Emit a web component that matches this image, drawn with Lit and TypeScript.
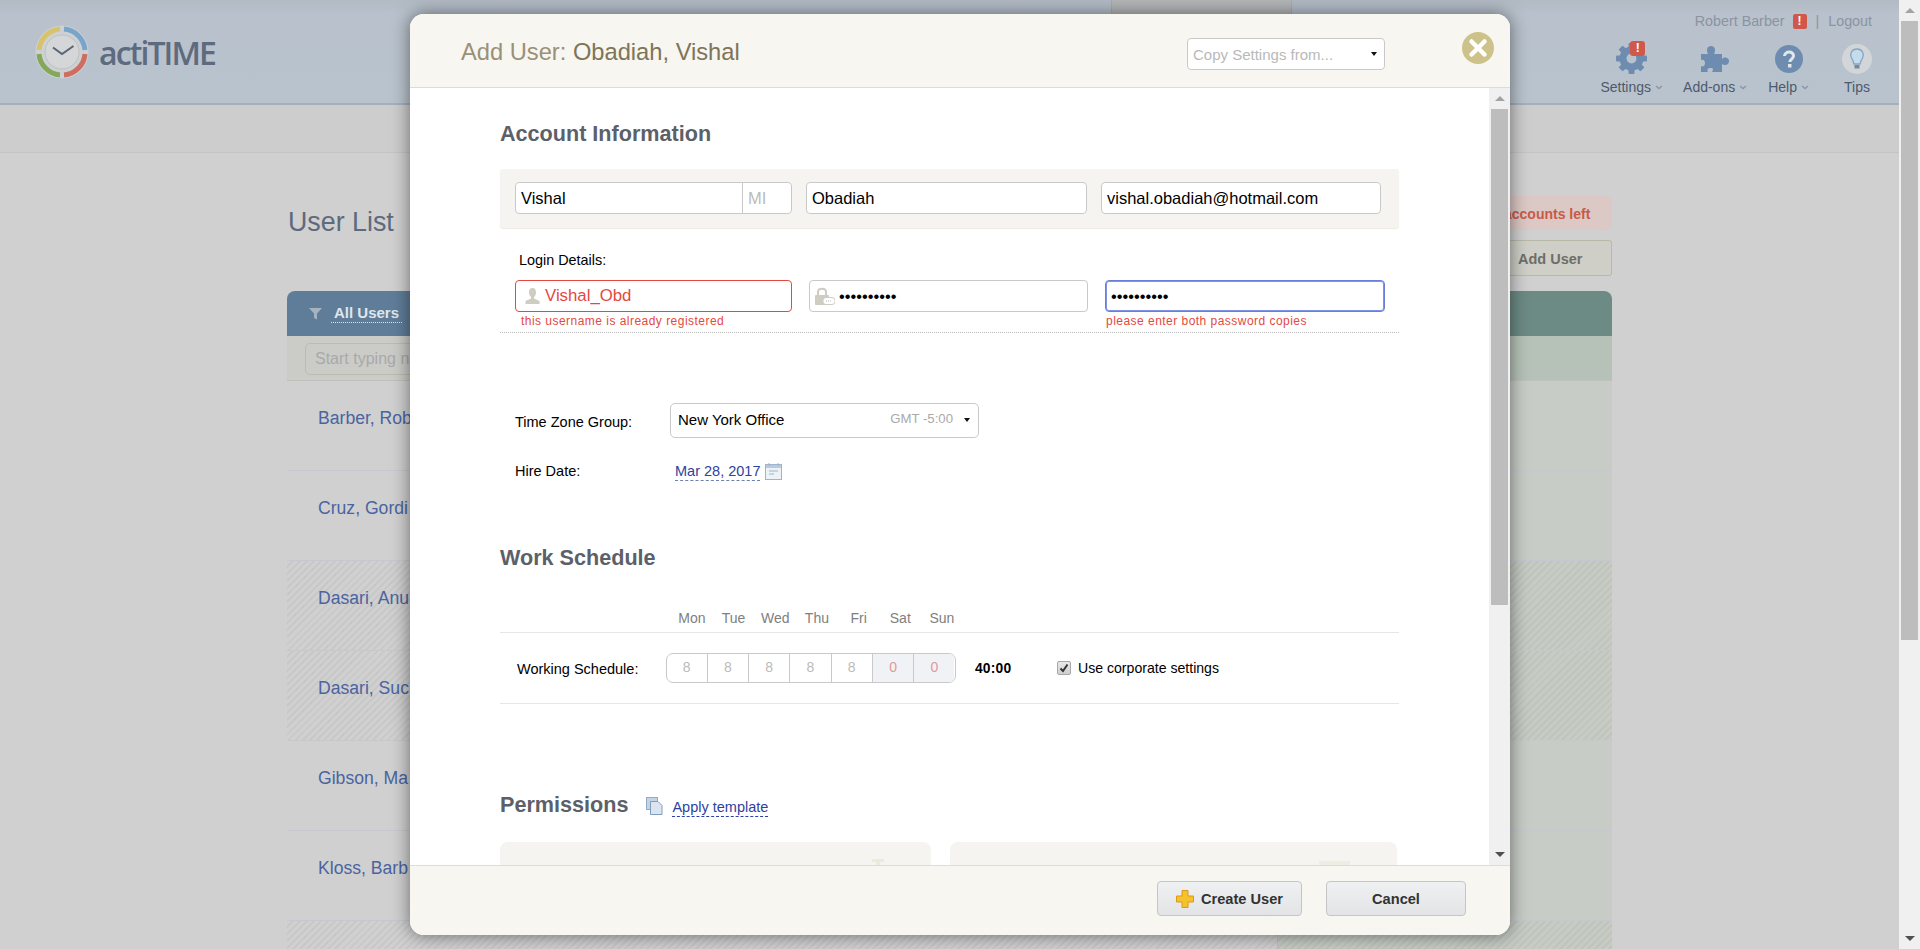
import { LitElement, html, css, svg } from "lit";
import { customElement } from "lit/decorators.js";

const rows = [
  { name: "Barber, Rob", kind: "plain" },
  { name: "Cruz, Gordi", kind: "plain" },
  { name: "Dasari, Anu", kind: "hatch" },
  { name: "Dasari, Suc", kind: "hatch" },
  { name: "Gibson, Ma", kind: "plain" },
  { name: "Kloss, Barb", kind: "plain" },
  { name: "", kind: "hatch" },
];
const days = ["Mon", "Tue", "Wed", "Thu", "Fri", "Sat", "Sun"];
const hours = ["8", "8", "8", "8", "8", "0", "0"];

const chevron = html`<svg class="chev" width="8" height="5" viewBox="0 0 8 5"><path d="M1 1l3 2.6L7 1" fill="none" stroke="#8b95a3" stroke-width="1.3"/></svg>`;

const gearTeeth = [0, 45, 90, 135, 180, 225, 270, 315].map(
  (a) => svg`<rect x="13.5" y="1" width="6" height="6.5" rx="1" transform="rotate(${a} 16.5 16.5)" fill="#6d8cb0"/>`
);

@customElement("app-root")
export class AppRoot extends LitElement {
  static styles = css`
    :host { display: flex; position: relative; width: 1920px; height: 949px; overflow: hidden; background: #d0d0d0; font-family: "Liberation Sans", Arial, sans-serif; color: #000; }
    * { box-sizing: border-box; }
    svg { display: block; flex: none; }
    .page { flex: 1; min-width: 0; height: 949px; overflow: hidden; display: flex; flex-direction: column; }
    .scroll { flex: none; width: 21px; background: #f0f0f0; display: flex; flex-direction: column; align-items: center; padding: 0 2px; }
    .arrow-box { flex: none; height: 21px; width: 100%; display: flex; align-items: center; justify-content: center; }
    .up { width: 0; height: 0; border: 5px solid transparent; border-top: 0; border-bottom: 5px solid #a3a3a3; }
    .down { width: 0; height: 0; border: 5px solid transparent; border-bottom: 0; border-top: 5px solid #505050; }
    .thumb { width: 100%; background: #bdbdbd; flex: none; }
    .grow { flex: 1; }

    .top { height: 105px; flex: none; display: flex; background: linear-gradient(180deg, #b2bac4 0, #b8c1cc 14px, #b9c3ce 100%); border-bottom: 2px solid #a6b0bc; }
    .logo { display: flex; align-items: center; padding-left: 35px; height: 103px; width: 1111px; flex: none; }
    .logo-text { font-family: "Open Sans", sans-serif; font-weight: 600; font-size: 32px; letter-spacing: -1.9px; color: #5e6a7e; margin: 2px 0 0 10px; }
    .tab { width: 181px; height: 47px; flex: none; background: #b5b7b8; border: 1px solid #a8aeb6; border-top: 0; }
    .top-right { margin-left: auto; display: flex; flex-direction: column; align-items: flex-end; padding-right: 27px; }
    .user-row { display: flex; align-items: center; height: 16px; margin-top: 13px; font-size: 14.3px; color: #8a94a2; }
    .alert { width: 14px; height: 15px; border-radius: 2px; background: #d0584a; color: #fff; font-weight: 700; font-size: 12px; line-height: 15px; text-align: center; margin-left: 8px; }
    .sep { margin: 0 9px 0 9px; }
    .icons { display: flex; margin-top: 12px; margin-right: 0; }
    .item { display: flex; flex-direction: column; align-items: center; }
    .item-icon { height: 35px; display: flex; align-items: center; justify-content: center; position: relative; }
    .item-label { display: flex; align-items: center; gap: 4px; font-size: 14px; color: #4d5a6c; height: 20px; margin-top: 1px; }
    .badge { position: absolute; left: 15px; top: 0; width: 15px; height: 15px; border-radius: 3px; background: #d0584a; color: #fff; font-size: 12px; font-weight: 700; line-height: 15px; text-align: center; }
    .gap-a { margin-left: 20px; }
    .gap-b { margin-left: 21px; }
    .gap-c { margin-left: 33px; }

    .band { height: 48px; flex: none; background: #cdcdcd; border-bottom: 1px solid #c4c4c4; }
    .content { padding: 43px 0 0 287px; width: 1612px; }
    .title-row { display: flex; justify-content: space-between; align-items: flex-start; }
    .title { font-size: 26.8px; line-height: 32px; color: #5d6a7c; margin-top: 10px; margin-left: 1px; }
    .actions { display: flex; flex-direction: column; align-items: flex-end; gap: 10px; margin-bottom: 15px; }
    .pill { height: 34px; width: 140px; border-radius: 6px; background: #dcc8c4; color: #c95a48; font-weight: 700; font-size: 14px; line-height: 36px; padding-left: 32px; }
    .addbtn { height: 36px; width: 140px; border-radius: 3px; background: #cfcfc8; border: 1px solid #b9b9a8; color: #6e6e68; font-weight: 700; font-size: 14.5px; line-height: 36px; padding-left: 45px; }
    .head { display: flex; height: 45px; border-radius: 8px 8px 0 0; overflow: hidden; }
    .head-l { width: 991px; background: #5f7d99; display: flex; align-items: center; padding-left: 22px; gap: 9px; color: #dfe5ea; font-size: 15px; font-weight: 700; }
    .head-r { flex: 1; background: #6c8b84; }
    .all { border-bottom: 1px dotted #dfe5ea; padding: 0 3px; line-height: 18px; margin-top: -1px; }
    .filter { display: flex; height: 45px; border-bottom: 1px solid #bfc1bc; }
    .filter-l { width: 991px; background: #cbccc8; padding: 7px 0 0 18px; }
    .filter-r { flex: 1; background: #b6c2b8; }
    .search { width: 400px; height: 32px; border: 1px solid #bdbcb0; border-radius: 5px; padding-left: 9px; line-height: 30px; font-size: 16px; color: #a9a9a9; }
    .row { display: flex; height: 90px; border-bottom: 1px solid #c6c8cf; }
    .row-l { width: 991px; padding: 27px 0 0 31px; font-size: 17.6px; line-height: 20px; color: #4a64a0; }
    .row-r { flex: 1; background: #c7cdc6; }
    .row.hatch { border-bottom-color: #c8c8c8; }
    .row.hatch .row-l { background: repeating-linear-gradient(135deg, #d0d0d0 0 3px, #c8c8c8 3px 5px); }
    .row.hatch .row-r { background: repeating-linear-gradient(135deg, #c6cbc4 0 3px, #bfc4bd 3px 5px); }
    .row-l.div { border-right: 1px solid #c0c0c0; }

    .modal { position: absolute; left: 410px; top: 14px; width: 1100px; height: 921px; border-radius: 14px; background: #fff; box-shadow: 0 0 18px rgba(0,0,0,.5); display: flex; flex-direction: column; overflow: hidden; }
    .m-head { height: 74px; flex: none; background: #f8f6f0; border-bottom: 1px solid #e0dcd2; display: flex; align-items: center; padding-left: 51px; }
    .m-title { font-size: 23.7px; color: #9a9078; margin-top: 3px; }
    .m-title b { font-weight: 400; color: #7f7458; }
    .copy { margin-left: auto; width: 198px; height: 32px; background: #fff; border: 1px solid #c9c9c9; border-radius: 4px; display: flex; align-items: center; justify-content: space-between; padding: 1px 7px 0 5px; font-size: 15px; color: #b9b9b9; margin-top: 6px; }
    .caret { width: 0; height: 0; border: 3.5px solid transparent; border-bottom: 0; border-top: 4px solid #111; }
    .close { width: 32px; height: 32px; border-radius: 50%; background: #cdc28a; margin: -6px 16px 0 77px; display: flex; align-items: center; justify-content: center; }
    .m-mid { flex: 1; min-height: 0; display: flex; }
    .m-body { flex: 1; min-width: 0; overflow: hidden; padding: 33px 0 0 90px; }
    .m-body .scrollwrap { width: 899px; }
    h2 { margin: 0; font-size: 21.6px; line-height: 26px; font-weight: 700; color: #5c6068; }
    .name-band { margin-top: 22px; height: 59px; background: #f6f4f0; border-radius: 3px; box-shadow: 0 1px 1px #eeeae4; padding: 13px 0 0 15px; display: flex; }
    .field { height: 32px; background: #fff; border: 1px solid #c9c9c9; border-radius: 4px; display: flex; align-items: center; padding-left: 5px; font-size: 16.5px; flex: none; }
    .mi { margin-left: auto; width: 49px; height: 100%; border-left: 1px solid #c9c9c9; color: #bbb; padding-left: 5px; line-height: 30px; }
    .w1 { width: 277px; }
    .w2 { width: 281px; margin-left: 14px; }
    .w3 { width: 280px; margin-left: 14px; }
    .login-label { margin: 23px 0 0 19px; font-size: 14.4px; line-height: 18px; }
    .login { margin-top: 11px; padding: 0 0 3px 15px; border-bottom: 1px dotted #bcbcbc; display: grid; grid-template-columns: 277px 279px 280px; column-gap: 17px; }
    .login .field { padding-left: 9px; gap: 5px; }
    .err-f { border-color: #e4493f; color: #e4493f; font-size: 16.8px !important; }
    .focus { border: 1px solid #6a7fd8; box-shadow: 0 0 0 1px #7f93e4 inset; padding-left: 5px !important; }
    .dots { font-size: 16.4px; letter-spacing: 0; line-height: 1; }
    .err { color: #e4493f; font-size: 12px; line-height: 16px; margin-top: 1px; padding-left: 6px; letter-spacing: .47px; white-space: nowrap; }
    .err.r { padding-left: 1px; }
    .tz { display: flex; margin-top: 70px; padding-left: 15px; }
    .lbl { width: 155px; font-size: 14.5px; line-height: 18px; flex: none; }
    .tz .lbl { padding-top: 10px; }
    .tz-sel { width: 309px; height: 35px; border: 1px solid #c9c9c9; border-radius: 5px; display: flex; align-items: center; padding: 0 8px 3px 7px; font-size: 15px; }
    .gmt { margin-left: auto; color: #aaa; font-size: 13.2px; margin-top: -1px; margin-right: 11px; }
    .tz-sel .caret { margin-top: 2px; }
    .hire { display: flex; margin-top: 24px; padding-left: 15px; align-items: flex-start; }
    .hire .lbl { width: 160px; }
    .link { color: #2d42a0; font-size: 14.5px; line-height: 18px; border-bottom: 1px dashed #6e7fb0; }
    .cal { margin: 0 0 0 5px; }
    .ws { margin-top: 64px; }
    .days { margin-top: 38px; padding-left: 171px; height: 24px; display: flex; border-bottom: 1px solid #e6e6e6; font-size: 14px; line-height: 18px; color: #808080; }
    .days span { width: 41.7px; text-align: center; }
    .sched { display: flex; align-items: center; height: 71px; border-bottom: 1px solid #e6e6e6; padding-left: 17px; font-size: 14.1px; }
    .sched .lbl { width: 149.5px; padding-top: 1px; }
    .cells { display: flex; width: 290px; height: 30px; border: 1px solid #c9c9c9; border-radius: 7px; overflow: hidden; flex: none; margin-left: -1px; }
    .cell { flex: 1; border-right: 1px solid #c9c9c9; text-align: center; color: #bbb; line-height: 27px; font-size: 14px; }
    .cell:last-child { border-right: 0; }
    .cell.off { background: #f0f2f5; color: #e09a9a; }
    .total { margin-left: 19.5px; width: 82px; font-weight: 700; font-size: 13.8px; letter-spacing: .2px; }
    .check { width: 14px; height: 14px; border: 1px solid #a8a8a8; border-radius: 2px; background: linear-gradient(#e8e8e8, #cfcfcf); margin-right: 7px; display: flex; align-items: center; justify-content: center; }
    .perm-row { display: flex; align-items: flex-end; margin-top: 88px; }
    .tpl { margin: 0 9px 3px 18px; }
    .perm-row .link { margin-bottom: 1px; border-bottom-color: #2d42a0; }
    .panels { display: flex; gap: 19px; margin-top: 24px; }
    .panel { height: 100px; background: #f6f4f0; border-radius: 8px; padding-top: 17px; display: flex; justify-content: flex-end; }
    .p1 { width: 431px; padding-right: 47px; }
    .p2 { width: 447px; padding-right: 47px; padding-top: 19px; }
    .t-mark { width: 12px; height: 20px; background: linear-gradient(#efe9dc 0 3px, transparent 3px), linear-gradient(90deg, transparent 4px, #efe9dc 4px 8px, transparent 8px); }
    .r-mark { width: 31px; height: 20px; background: #f0ece2; }
    .m-foot { height: 70px; flex: none; background: #f8f6f0; border-top: 1px solid #e0dcd2; display: flex; padding: 15px 44px 0 0; justify-content: flex-end; gap: 24px; }
    .btn { height: 35px; border: 1px solid #c5c5c5; border-radius: 4px; background: linear-gradient(#eef0f2, #e2e4e6); font-weight: 700; font-size: 14.6px; color: #333; display: flex; align-items: center; justify-content: center; gap: 7px; }
    .btn.create { width: 145px; }
    .btn.cancel { width: 140px; }
  `;

  private scrollbar(top: number, h: number) {
    return html`<div class="scroll">
      <div class="arrow-box"><div class="up"></div></div>
      <div class="thumb" style="height:${h}px;margin-top:${top}px"></div>
      <div class="grow"></div>
      <div class="arrow-box"><div class="down"></div></div>
    </div>`;
  }

  private logo() {
    return html`<svg width="54" height="54" viewBox="0 0 54 54">
      <circle cx="27" cy="27" r="26.5" fill="#cdd1d4"/>
      <g fill="none" stroke-width="5">
        <path d="M4 25A23 23 0 0 1 25 4" stroke="#d8c36d"/>
        <path d="M29 4A23 23 0 0 1 50 25" stroke="#7aa5cb"/>
        <path d="M50 29A23 23 0 0 1 29 50" stroke="#cd6e60"/>
        <path d="M25 50A23 23 0 0 1 4 29" stroke="#84a858"/>
      </g>
      <circle cx="27" cy="27" r="17" fill="#d5d6d8" stroke="#bfc0c2"/>
      <path d="M18 22.5L27 29L38.5 21" fill="none" stroke="#5a6478" stroke-width="2"/>
    </svg>`;
  }

  private topRight() {
    return html`<div class="top-right">
      <div class="user-row">Robert Barber<div class="alert">!</div><span class="sep">|</span>Logout</div>
      <div class="icons">
        <div class="item">
          <div class="item-icon">
            <svg width="33" height="33" viewBox="0 0 33 33">${gearTeeth}<circle cx="16.5" cy="16.5" r="8.5" fill="none" stroke="#6d8cb0" stroke-width="7"/></svg>
            <div class="badge">!</div>
          </div>
          <div class="item-label">Settings${chevron}</div>
        </div>
        <div class="item gap-a">
          <div class="item-icon">
            <svg width="30" height="30" viewBox="0 0 30 30"><path d="M1 10H8C6 6 7 2 11 2C15 2 16 6 14 10H22V15C25 12 29 14 29 17C29 21 25 22 22 20V28H12C14 25 13 24 11 24C7 24 7 26 8 28H1V22C3 23 5 22 5 19C5 16 3 15 1 16Z" fill="#6d8cb0"/></svg>
          </div>
          <div class="item-label">Add-ons${chevron}</div>
        </div>
        <div class="item gap-b">
          <div class="item-icon">
            <svg width="28" height="28" viewBox="0 0 28 28"><circle cx="14" cy="14" r="14" fill="#6d8cb0"/><path d="M9.5 11C9.8 5.8 18.500 5.800 18.500 10.800C18.500 14 15 14 14.800 17" fill="none" stroke="#e2e6ea" stroke-width="3"/><rect x="13" y="19" width="3.500" height="3.500" fill="#e2e6ea"/></svg>
          </div>
          <div class="item-label">Help${chevron}</div>
        </div>
        <div class="item gap-c">
          <div class="item-icon">
            <svg width="30" height="30" viewBox="0 0 30 30"><circle cx="15" cy="15" r="15" fill="#d3d6d8"/><path d="M15 5C9.500 5 7.500 10 9.500 14C11 16.500 11.500 18 12 20H18C18.500 18 19 16.500 20.500 14C22.500 10 20.500 5 15 5Z" fill="#c4dcec" stroke="#88a6c4" stroke-width="1.400"/><rect x="12.500" y="21" width="5" height="3.500" fill="#7d8794"/></svg>
          </div>
          <div class="item-label">Tips</div>
        </div>
      </div>
    </div>`;
  }

  private background() {
    return html`<div class="page">
      <div class="top">
        <div class="logo">${this.logo()}<div class="logo-text">actiTIME</div></div>
        <div class="tab"></div>
        ${this.topRight()}
      </div>
      <div class="band"></div>
      <div class="content">
        <div class="title-row">
          <div class="title">User List</div>
          <div class="actions">
            <div class="pill">accounts left</div>
            <div class="addbtn">Add User</div>
          </div>
        </div>
        <div class="head">
          <div class="head-l">
            <svg width="13" height="13" viewBox="0 0 13 13"><path d="M0 1H13L8 6.500V12.500L5 11V6.500Z" fill="#a5b3c0"/></svg>
            <span class="all">All Users</span>
            <div class="caret" style="border-top-color:#a5b3c0"></div>
          </div>
          <div class="head-r"></div>
        </div>
        <div class="filter">
          <div class="filter-l"><div class="search">Start typing name</div></div>
          <div class="filter-r"></div>
        </div>
        ${rows.map((r) => html`<div class="row ${r.kind}"><div class="row-l div">${r.name}</div><div class="row-r"></div></div>`)}
      </div>
    </div>`;
  }

  private modal() {
    return html`<div class="modal">
      <div class="m-head">
        <div class="m-title">Add User: <b>Obadiah, Vishal</b></div>
        <div class="copy">Copy Settings from...<div class="caret"></div></div>
        <div class="close"><svg width="20" height="20" viewBox="0 0 20 20"><path d="M3.500 3.500L16.500 16.500M16.500 3.500L3.500 16.500" stroke="#fff" stroke-width="4.500" stroke-linecap="round"/></svg></div>
      </div>
      <div class="m-mid">
        <div class="m-body"><div class="scrollwrap">
          <h2>Account Information</h2>
          <div class="name-band">
            <div class="field w1">Vishal<div class="mi">MI</div></div>
            <div class="field w2">Obadiah</div>
            <div class="field w3">vishal.obadiah@hotmail.com</div>
          </div>
          <div class="login-label">Login Details:</div>
          <div class="login">
            <div class="field err-f">
              <svg width="15" height="16" viewBox="0 0 15 16"><path d="M7.500 0C4.800 0 4 2.200 4 4.500C4 6.500 5 8 6 9V10.500L0.500 13V16H14.500V13L9 10.500V9C10 8 11 6.500 11 4.500C11 2.200 10.200 0 7.500 0Z" fill="#cfccc2"/></svg>
              Vishal_Obd
            </div>
            <div class="field" style="padding-left:5px;gap:4px">
              <svg width="20" height="18" viewBox="0 0 20 18"><path d="M3 8V5C3 0.500 11 0.500 11 5V8" fill="none" stroke="#cfccc2" stroke-width="2"/><rect x="0" y="8" width="14" height="10" rx="1" fill="#cfccc2"/><rect x="8" y="10.500" width="12" height="7" rx="3" fill="#fff" stroke="#cfccc2"/><path d="M11 14h1m1 0h1m1 0h1" stroke="#bbb"/></svg>
              <span class="dots">••••••••••</span>
            </div>
            <div class="field focus"><span class="dots">••••••••••</span></div>
            <div class="err">this username is already registered</div>
            <div></div>
            <div class="err r">please enter both password copies</div>
          </div>
          <div class="tz">
            <div class="lbl">Time Zone Group:</div>
            <div class="tz-sel">New York Office<span class="gmt">GMT -5:00</span><div class="caret"></div></div>
          </div>
          <div class="hire">
            <div class="lbl">Hire Date:</div>
            <span class="link">Mar 28, 2017</span>
            <svg class="cal" width="18" height="18" viewBox="0 0 18 18"><rect x=".5" y="2.500" width="16" height="15" fill="#edf2f7" stroke="#9db4cc"/><rect x="1" y="3" width="15" height="3" fill="#b8cbdd"/><path d="M4 1v3M13 1v3" stroke="#9db4cc"/><path d="M4 9h9M4 12h5" stroke="#c4d3e2" stroke-width="2"/></svg>
          </div>
          <h2 class="ws">Work Schedule</h2>
          <div class="days">${days.map((d) => html`<span>${d}</span>`)}</div>
          <div class="sched">
            <div class="lbl">Working Schedule:</div>
            <div class="cells">${hours.map((h) => html`<div class="cell ${h === "0" ? "off" : ""}">${h}</div>`)}</div>
            <div class="total">40:00</div>
            <div class="check"><svg width="10" height="10" viewBox="0 0 10 10"><path d="M1.500 5.500L4 8L8.500 1.500" fill="none" stroke="#333" stroke-width="2"/></svg></div>
            Use corporate settings
          </div>
          <div class="perm-row">
            <h2>Permissions</h2>
            <svg class="tpl" width="17" height="18" viewBox="0 0 17 18"><rect x=".5" y=".5" width="11" height="12" fill="#c5d4e4" stroke="#93adc9"/><path d="M4.500 4.500H12L16 8.500V17.500H4.500Z" fill="#dbe5ef" stroke="#7f9dbe"/></svg>
            <span class="link">Apply template</span>
          </div>
          <div class="panels">
            <div class="panel p1"><div class="t-mark"></div></div>
            <div class="panel p2"><div class="r-mark"></div></div>
          </div>
        </div></div>
        ${this.scrollbar(0, 496)}
      </div>
      <div class="m-foot">
        <div class="btn create">
          <svg width="18" height="18" viewBox="0 0 18 18"><path d="M6 .5H12V6H17.500V12H12V17.500H6V12H.5V6H6Z" fill="#f6c22c" stroke="#dc9a14"/></svg>
          Create User
        </div>
        <div class="btn cancel">Cancel</div>
      </div>
    </div>`;
  }

  render() {
    return html`${this.background()}${this.scrollbar(0, 619)}${this.modal()}`;
  }
}
